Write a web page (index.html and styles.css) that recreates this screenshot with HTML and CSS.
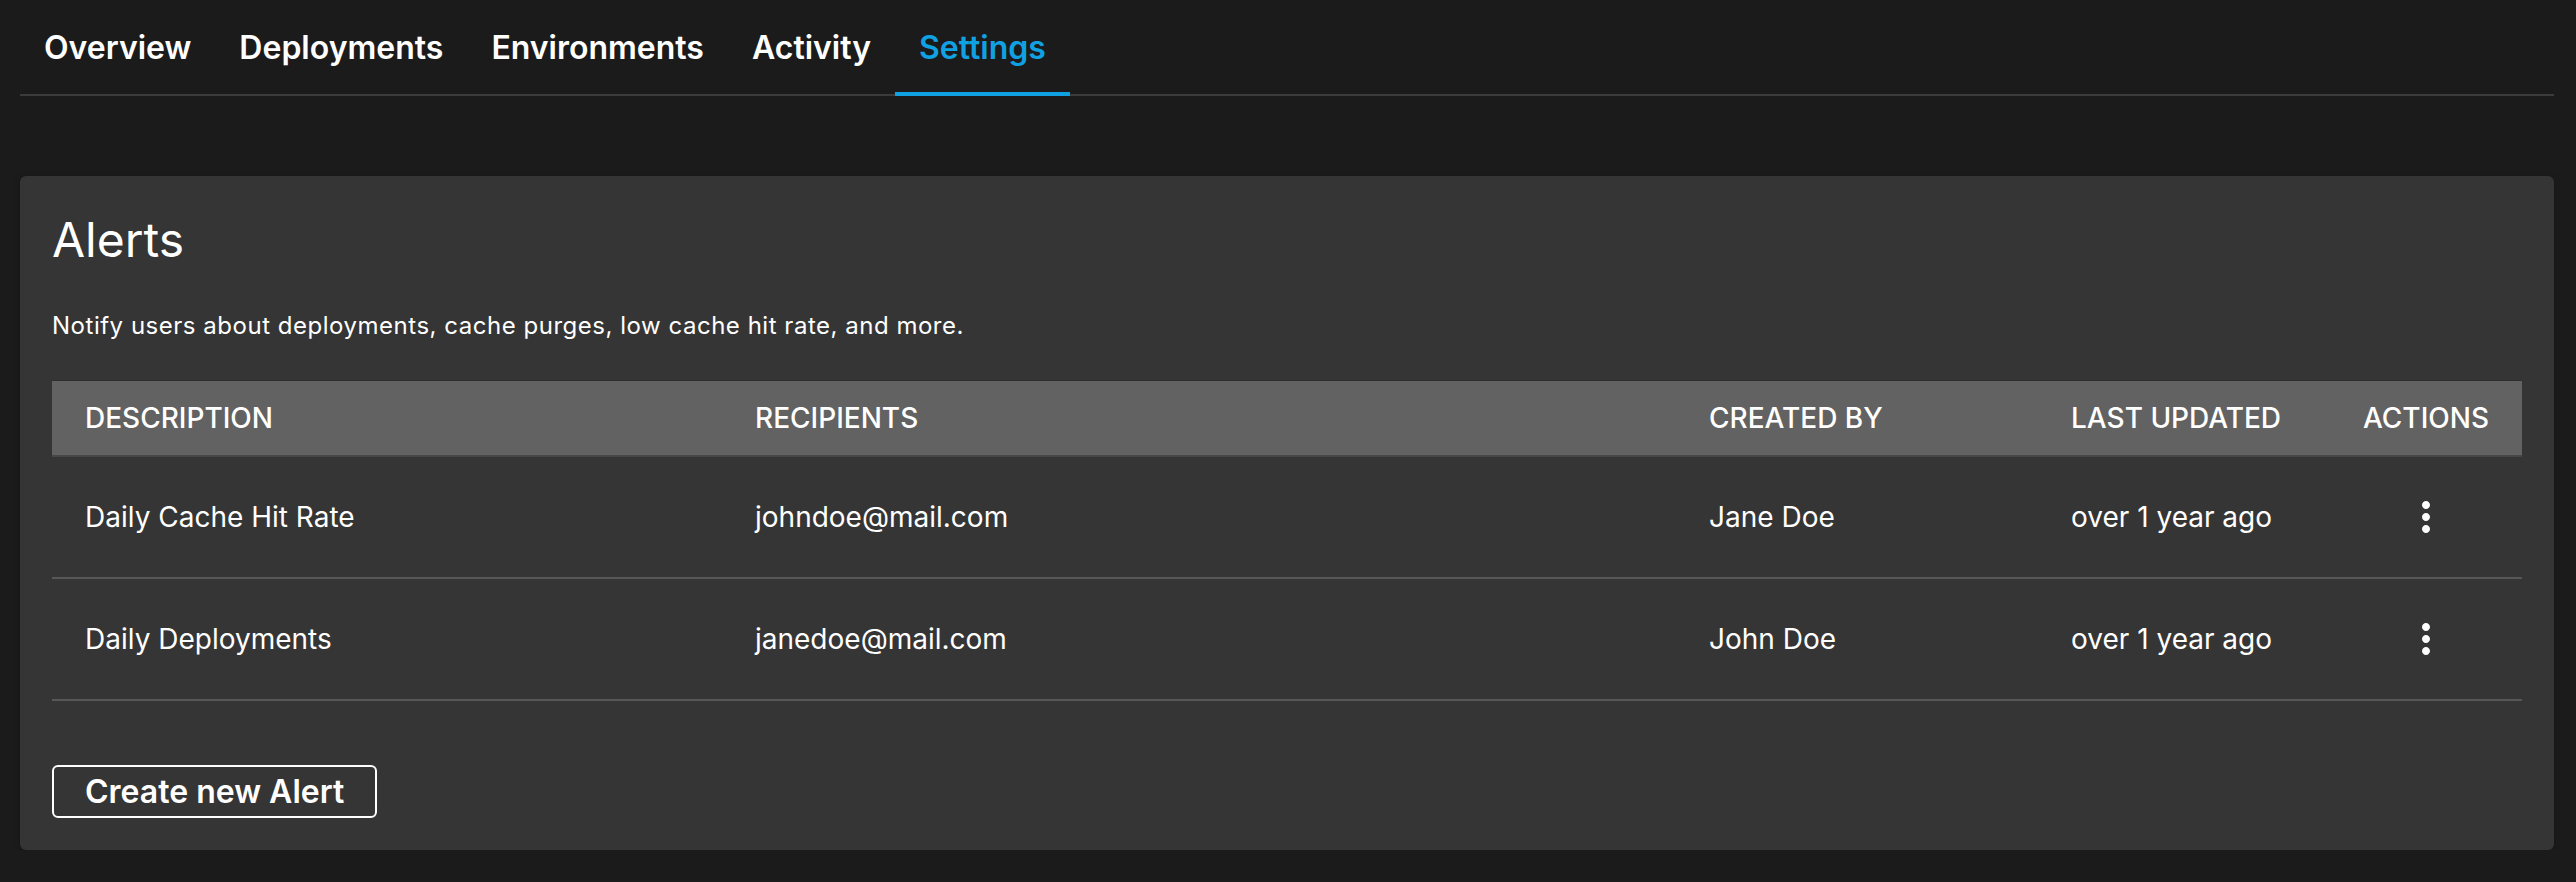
FILE: index.html
```html
<!DOCTYPE html>
<html lang="en">
<head>
<meta charset="utf-8">
<title>Settings - Alerts</title>
<link rel="stylesheet" href="styles.css">
</head>
<body>
<div class="page">
  <nav class="tabs">
    <a class="tab">Overview</a>
    <a class="tab">Deployments</a>
    <a class="tab">Environments</a>
    <a class="tab">Activity</a>
    <a class="tab tab-active">Settings<span class="indicator"></span></a>
  </nav>

  <section class="panel">
    <h1 class="panel-title">Alerts</h1>
    <p class="panel-desc">Notify users about deployments, cache purges, low cache hit rate, and more.</p>

    <table class="alerts">
      <thead>
        <tr>
          <th class="col-desc">DESCRIPTION</th>
          <th class="col-rec">RECIPIENTS</th>
          <th class="col-by">CREATED BY</th>
          <th class="col-upd">LAST UPDATED</th>
          <th class="col-act">ACTIONS</th>
        </tr>
      </thead>
      <tbody>
        <tr>
          <td>Daily Cache Hit Rate</td>
          <td>johndoe@mail.com</td>
          <td>Jane Doe</td>
          <td>over 1 year ago</td>
          <td class="cell-act">
            <svg class="kebab" viewBox="0 0 24 24" width="48" height="48" aria-hidden="true"><path d="M12 8c1.1 0 2-.9 2-2s-.9-2-2-2-2 .9-2 2 .9 2 2 2zm0 2c-1.1 0-2 .9-2 2s.9 2 2 2 2-.9 2-2-.9-2-2-2zm0 6c-1.1 0-2 .9-2 2s.9 2 2 2 2-.9 2-2-.9-2-2-2z"/></svg>
          </td>
        </tr>
        <tr>
          <td>Daily Deployments</td>
          <td>janedoe@mail.com</td>
          <td>John Doe</td>
          <td>over 1 year ago</td>
          <td class="cell-act">
            <svg class="kebab" viewBox="0 0 24 24" width="48" height="48" aria-hidden="true"><path d="M12 8c1.1 0 2-.9 2-2s-.9-2-2-2-2 .9-2 2 .9 2 2 2zm0 2c-1.1 0-2 .9-2 2s.9 2 2 2 2-.9 2-2-.9-2-2-2zm0 6c-1.1 0-2 .9-2 2s.9 2 2 2 2-.9 2-2-.9-2-2-2z"/></svg>
          </td>
        </tr>
      </tbody>
    </table>

    <button class="btn-outline">Create new Alert</button>
  </section>
</div>
</body>
</html>
```
FILE: styles.css
```css
html, body {
  margin: 0;
  padding: 0;
  background: #1b1b1b;
  color: #ffffff;
  font-family: Inter, "Noto Sans", "Liberation Sans", sans-serif;
}

.page {
  padding: 0 22px 0 20px;
}

.tabs {
  display: flex;
  height: 94px;
  border-bottom: 2px solid #3b3b3b;
}

.tab {
  position: relative;
  display: flex;
  align-items: center;
  padding: 0 24px;
  font-size: 32px;
  font-weight: 600;
  color: #ffffff;
  cursor: pointer;
}

.tab-active {
  color: #10a1e3;
}

.indicator {
  position: absolute;
  left: 0;
  right: 0;
  bottom: -2px;
  height: 4px;
  background: #10a1e3;
}

.panel {
  margin-top: 80px;
  background: #353535;
  border-radius: 6px;
  padding: 32px 32px 32px;
  box-shadow: 0 2px 6px rgba(0, 0, 0, 0.25);
}

.panel-title {
  margin: 0;
  font-size: 48px;
  line-height: 64px;
  font-weight: 400;
}

.panel-desc {
  margin: 36px 0 0;
  font-size: 24px;
  line-height: 36px;
  letter-spacing: 0.52px;
}

.alerts {
  margin-top: 36px;
  width: 100%;
  border-collapse: collapse;
  table-layout: fixed;
  font-size: 28px;
}

.alerts th {
  background: #626262;
  text-align: left;
  font-weight: 500;
  line-height: 40px;
  padding: 17px 32px 17px 33px;
  border-top: 1px solid #2e2e2e;
  border-bottom: 2px solid #474747;
}

.alerts td {
  line-height: 40px;
  padding: 40px 32px 40px 33px;
  border-bottom: 2px solid #575757;
  font-weight: 400;
}

.col-desc { width: 605px; }
.col-rec { width: 889px; }
.col-by { width: 297px; }
.col-upd { width: 227px; }
.col-act { width: auto; }

.cell-act {
  text-align: center;
}

.alerts td.cell-act {
  padding: 36px 16px;
}

.kebab {
  display: block;
  margin: 0 auto;
  fill: #ffffff;
}

.btn-outline {
  display: block;
  margin-top: 64px;
  background: transparent;
  color: #ffffff;
  border: 2px solid #ffffff;
  border-radius: 6px;
  font-family: Inter, "Noto Sans", "Liberation Sans", sans-serif;
  font-size: 32px;
  font-weight: 600;
  line-height: 41px;
  padding: 4px 31px;
  cursor: pointer;
}
```
